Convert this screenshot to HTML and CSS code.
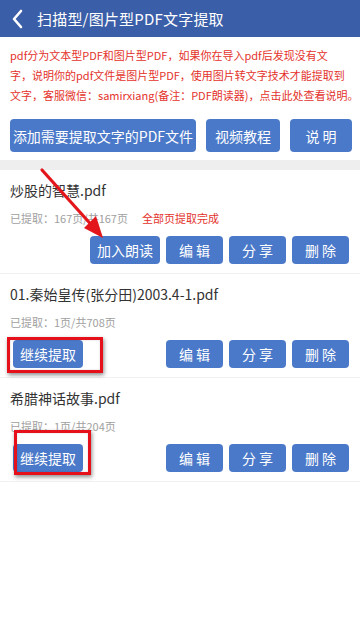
FILE: index.html
```html
<!DOCTYPE html>
<html lang="zh-CN">
<head>
<meta charset="utf-8">
<meta name="viewport" content="width=device-width, initial-scale=1">
<title>扫描型/图片型PDF文字提取</title>
<link rel="stylesheet" href="styles.css">
</head>
<body>
<div class="page">
  <header class="topbar">
    <svg class="back" width="14" height="20" viewBox="0 0 14 20"><polyline points="10,2 3,10 10,18" fill="none" stroke="#fff" stroke-width="2.6" stroke-linecap="round" stroke-linejoin="round"/></svg>
    <h1 class="title">扫描型/图片型PDF文字提取</h1>
  </header>

  <div class="notice">
    <span class="line">pdf分为文本型PDF和图片型PDF，如果你在导入pdf后发现没有文</span>
    <span class="line">字，说明你的pdf文件是图片型PDF，使用图片转文字技术才能提取到</span>
    <span class="line">文字，客服微信：samirxiang(备注：PDF朗读器)，点击此处查看说明。</span>
  </div>

  <div class="actions">
    <button class="btn btn-lg btn-add">添加需要提取文字的PDF文件</button>
    <button class="btn btn-lg btn-video">视频教程</button>
    <button class="btn btn-lg btn-help">说 明</button>
  </div>

  <div class="band"></div>

  <ul class="files">
    <li class="file">
      <div class="name">炒股的智慧.pdf</div>
      <div class="meta"><span class="progress">已提取：167页/共167页</span><span class="done">全部页提取完成</span></div>
      <div class="ops">
        <button class="btn btn-sm btn-wide">加入朗读</button>
        <div class="ops-right">
          <button class="btn btn-sm">编 辑</button>
          <button class="btn btn-sm">分 享</button>
          <button class="btn btn-sm">删 除</button>
        </div>
      </div>
    </li>
    <li class="file">
      <div class="name">01.秦始皇传(张分田)2003.4-1.pdf</div>
      <div class="meta"><span class="progress">已提取：1页/共708页</span></div>
      <div class="ops ops-split">
        <button class="btn btn-sm btn-wide">继续提取</button>
        <div class="ops-right">
          <button class="btn btn-sm">编 辑</button>
          <button class="btn btn-sm">分 享</button>
          <button class="btn btn-sm">删 除</button>
        </div>
      </div>
    </li>
    <li class="file">
      <div class="name">希腊神话故事.pdf</div>
      <div class="meta"><span class="progress">已提取：1页/共204页</span></div>
      <div class="ops ops-split">
        <button class="btn btn-sm btn-wide">继续提取</button>
        <div class="ops-right">
          <button class="btn btn-sm">编 辑</button>
          <button class="btn btn-sm">分 享</button>
          <button class="btn btn-sm">删 除</button>
        </div>
      </div>
    </li>
  </ul>

  <div class="mark mark-1"></div>
  <div class="mark mark-2"></div>
  <svg class="arrow" width="360" height="637" viewBox="0 0 360 637">
    <line x1="42" y1="170" x2="96" y2="230" stroke="#e3161b" stroke-width="3.2" stroke-linecap="round"/>
    <polygon points="103,238 84,228 96,216" fill="#e3161b"/>
  </svg>
</div>
</body>
</html>
```

FILE: styles.css
```css
* { box-sizing: border-box; }
html, body { margin: 0; padding: 0; background: #fff; }
body {
  font-family: "Noto Sans CJK SC", "Noto Sans", Roboto, sans-serif;
  color: #333;
}
.page { position: relative; width: 360px; min-height: 637px; overflow: hidden; }

.topbar {
  height: 37px;
  background: #3b5ea8;
  display: flex;
  align-items: center;
  padding-left: 11px;
  gap: 12px;
}
.back { display: block; }
.title {
  margin: 0;
  font-size: 15px;
  letter-spacing: 0.2px;
  font-weight: 400;
  color: #fff;
  line-height: 37px;
}

.notice {
  padding: 8px 0 0 10px;
  color: #e4322b;
  font-size: 11px;
}
.notice .line { display: block; line-height: 20px; white-space: nowrap; }

.actions {
  display: flex;
  gap: 10px;
  padding: 14px 8px 8px 10px;
}
.btn {
  font-family: inherit;
  border: 0;
  background: #4b79c9;
  color: #fff;
  border-radius: 4px;
  padding: 0;
  margin: 0;
  cursor: pointer;
}
.btn-lg { height: 33px; font-size: 14px; }
.btn-add { width: 186px; }
.btn-video { width: 74px; }
.btn-help { width: 62px; }

.band { height: 10px; background: #eeeeee; }

.files { list-style: none; margin: 0; padding: 0; }
.file {
  padding: 10px 11px 9px 10px;
  border-bottom: 1px solid #f1f1f1;
}
.name { font-size: 14px; line-height: 20px; color: #333; }
.meta { margin-top: 10px; font-size: 11px; line-height: 16px; color: #a0a0a0; display: flex; }
.done { color: #e4322b; margin-left: 14px; }
.ops {
  margin-top: 10px;
  display: flex;
  justify-content: flex-end;
  gap: 6px;
}
.ops-split { justify-content: space-between; padding-left: 3px; }
.ops-right { display: flex; gap: 6px; }
.btn-sm { height: 28px; width: 57px; font-size: 14px; }
.btn-wide { width: 70px; }

.mark {
  position: absolute;
  border: 3px solid #e5101a;
  box-shadow: 1px 2px 4px rgba(0,0,0,0.45), inset 0 0 2px rgba(0,0,0,0.2);
}
.mark-1 { left: 7px; top: 337px; width: 96px; height: 36px; }
.mark-2 { left: 14px; top: 430px; width: 77px; height: 45px; }
.arrow { position: absolute; left: 0; top: 0; pointer-events: none; }
```
